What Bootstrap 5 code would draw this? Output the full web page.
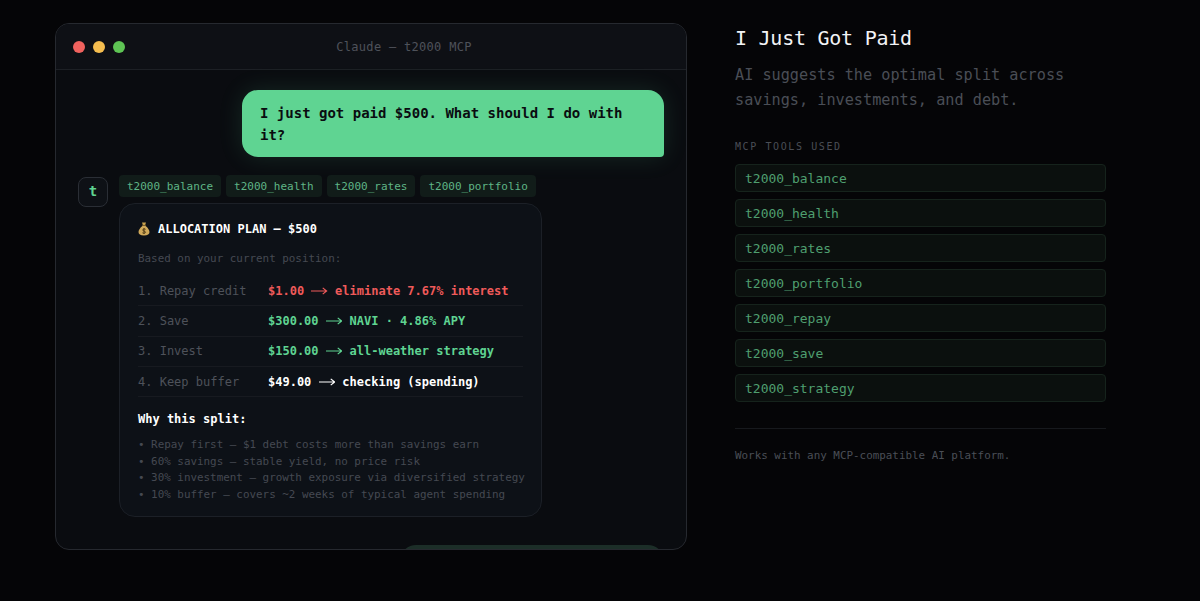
<!DOCTYPE html>
<html lang="en">
<head>
    <meta charset="UTF-8">
    <meta name="viewport" content="width=device-width, initial-scale=1.0">
    <title>I Just Got Paid</title>
    <link href="https://cdn.jsdelivr.net/npm/bootstrap@5.3.0/dist/css/bootstrap.min.css" rel="stylesheet">
    <style>
        body {
            background-color: #050507;
            color: #fff;
            font-family: "DejaVu Sans Mono", "Liberation Mono", monospace;
            height: 601px;
            overflow: hidden;
        }
        .page-wrap {
            padding: 23px 0 0 55px;
            gap: 48px;
        }
        .term-window {
            width: 632px;
            height: 527px;
            background-color: #0a0c10;
            border: 1px solid #26292f;
            border-radius: 14px;
            overflow: hidden;
            box-shadow: 0 0 40px rgba(255, 255, 255, .015);
        }
        .term-bar {
            height: 46px;
            background-color: #0e1015;
            border-bottom: 1px solid #1d2025;
            padding: 0 17px;
        }
        .term-dot { width: 12px; height: 12px; border-radius: 50%; }
        .dot-red { background-color: #f0625e; }
        .dot-yellow { background-color: #f5bd4f; }
        .dot-green { background-color: #5ec454; }
        .term-title {
            padding-left: 6px;
            text-align: center;
            font-size: 12px;
            letter-spacing: .3px;
            color: #4e525a;
        }
        .chat-body { padding: 20px 22px 0; }
        .user-bubble {
            width: 422px;
            background-color: #5fd492;
            color: #0a0c10;
            font-size: 14px;
            font-weight: 700;
            line-height: 22.4px;
            padding: 12px 18px 10px;
            border-radius: 16px 16px 4px 16px;
            box-shadow: 0 0 24px rgba(95, 212, 146, .14);
        }
        .next-bubble {
            width: 264px;
            height: 40px;
            margin-top: 28px;
            background-color: #1c2e28;
            border-radius: 16px 16px 4px 16px;
        }
        .agent-row { margin-top: 18px; gap: 11px; }
        .agent-avatar {
            width: 30px;
            height: 30px;
            margin-top: 2px;
            border: 1px solid #2a2e35;
            border-radius: 8px;
            background-color: #0e1116;
            color: #5fd492;
            font-size: 14px;
            font-weight: 700;
        }
        .tool-chips { gap: 5px; margin-bottom: 6px; }
        .tool-chip {
            height: 22px;
            line-height: 23px;
            padding: 0 8px;
            font-size: 11px;
            color: #5fb586;
            background-color: #111c19;
            border-radius: 4px;
        }
        .plan-card {
            width: 423px;
            background-color: #0d1117;
            border: 1px solid #1c2027;
            border-radius: 16px;
            padding: 16px 18px 13px;
        }
        .plan-title {
            font-size: 12px;
            font-weight: 700;
            line-height: 19px;
            color: #fff;
            margin-bottom: 11px;
        }
        .plan-note { font-size: 10.9px; line-height: 17px; color: #454952; margin-bottom: 9px; }
        .plan-row {
            height: 30.4px;
            font-size: 12px;
            border-bottom: 1px solid #171a20;
        }
        .plan-label { width: 130px; color: #4e525a; }
        .plan-value { font-weight: 700; }
        .val-red { color: #ef5a5a; }
        .val-green { color: #5fd492; }
        .val-white { color: #fff; }
        .flow-arrow { width: 16.6px; height: 8px; margin: 0 7.2px; vertical-align: 0; }
        .why-title { font-size: 12px; font-weight: 700; line-height: 19px; margin: 13px 0 8px; }
        .why-list { font-size: 10.9px; line-height: 16.4px; color: #454952; white-space: nowrap; }
        .side-panel { width: 371px; }
        .side-title { font-size: 20px; font-weight: 400; letter-spacing: -.25px; line-height: 30px; margin: 0 0 10px; color: #f2f3f5; }
        .side-sub { font-size: 15.2px; line-height: 25px; color: #4a4e56; margin-bottom: 26px; }
        .side-label { font-size: 10px; letter-spacing: 1.6px; line-height: 15px; color: #4a4e56; margin-bottom: 10px; }
        .tool-list { gap: 7px; }
        .tool-item {
            height: 28px;
            line-height: 27px;
            padding: 0 9px;
            font-size: 13px;
            color: #4f9f70;
            background-color: #0b100e;
            border: 1px solid #16231c;
            border-radius: 4px;
        }
        .side-rule { height: 1px; background-color: #17191d; margin: 26px 0 18px; }
        .side-foot { font-size: 10.9px; line-height: 17px; color: #4a4e56; }
    </style>
</head>
<body>
    <div class="page-wrap d-flex align-items-start">
        <!-- chat window -->
        <div class="term-window">
            <div class="term-bar d-flex align-items-center gap-2">
                <span class="term-dot dot-red"></span>
                <span class="term-dot dot-yellow"></span>
                <span class="term-dot dot-green"></span>
                <span class="term-title flex-grow-1">Claude — t2000 MCP</span>
            </div>
            <div class="chat-body">
                <div class="user-bubble ms-auto">I just got paid $500. What should I do with it?</div>

                <div class="agent-row d-flex align-items-start">
                    <div class="agent-avatar d-flex align-items-center justify-content-center flex-shrink-0">t</div>
                    <div>
                        <div class="tool-chips d-flex">
                            <span class="tool-chip">t2000_balance</span>
                            <span class="tool-chip">t2000_health</span>
                            <span class="tool-chip">t2000_rates</span>
                            <span class="tool-chip">t2000_portfolio</span>
                        </div>
                        <div class="plan-card">
                            <div class="plan-title d-flex align-items-center">
                                <svg class="me-2" width="12" height="14" viewBox="0 0 12 14">
                                    <path d="M4 .6h4L7.200 3h-2.400z" fill="#c9a24e"/>
                                    <rect x="4.200" y="2.900" width="3.600" height="1" fill="#8a6a2c"/>
                                    <path d="M4.400 3.900h3.200c2.200 1.600 3.900 4 3.900 6.200 0 2.400-1.800 3.400-5.500 3.400S.5 12.500.5 10.100c0-2.200 1.700-4.600 3.900-6.200z" fill="#d0a95a"/>
                                    <path d="M7.600 7.300C7 6.800 4.700 6.700 4.700 8c0 1.400 2.800.8 2.800 2.200 0 1.300-2.400 1.200-3.100.6M6 6v6" fill="none" stroke="#4a3512" stroke-width=".9"/>
                                </svg>
                                <span>ALLOCATION PLAN — $500</span>
                            </div>
                            <div class="plan-note">Based on your current position:</div>

                            <div class="plan-row d-flex align-items-center">
                                <span class="plan-label">1. Repay credit</span>
                                <span class="plan-value val-red">$1.00<svg class="flow-arrow" viewBox="0 0 17 8"><path d="M0 4h16M12 .8 16 4l-4 3.200" fill="none" stroke="currentColor" stroke-width="1.200"/></svg>eliminate 7.67% interest</span>
                            </div>
                            <div class="plan-row d-flex align-items-center">
                                <span class="plan-label">2. Save</span>
                                <span class="plan-value val-green">$300.00<svg class="flow-arrow" viewBox="0 0 17 8"><path d="M0 4h16M12 .8 16 4l-4 3.200" fill="none" stroke="currentColor" stroke-width="1.200"/></svg>NAVI · 4.86% APY</span>
                            </div>
                            <div class="plan-row d-flex align-items-center">
                                <span class="plan-label">3. Invest</span>
                                <span class="plan-value val-green">$150.00<svg class="flow-arrow" viewBox="0 0 17 8"><path d="M0 4h16M12 .8 16 4l-4 3.200" fill="none" stroke="currentColor" stroke-width="1.200"/></svg>all-weather strategy</span>
                            </div>
                            <div class="plan-row d-flex align-items-center">
                                <span class="plan-label">4. Keep buffer</span>
                                <span class="plan-value val-white">$49.00<svg class="flow-arrow" viewBox="0 0 17 8"><path d="M0 4h16M12 .8 16 4l-4 3.200" fill="none" stroke="currentColor" stroke-width="1.200"/></svg>checking (spending)</span>
                            </div>

                            <div class="why-title">Why this split:</div>
                            <div class="why-list">
                                <div>• Repay first — $1 debt costs more than savings earn</div>
                                <div>• 60% savings — stable yield, no price risk</div>
                                <div>• 30% investment — growth exposure via diversified strategy</div>
                                <div>• 10% buffer — covers ~2 weeks of typical agent spending</div>
                            </div>
                        </div>
                    </div>
                </div>

                <div class="next-bubble ms-auto"></div>
            </div>
        </div>

        <!-- right column -->
        <div class="side-panel">
            <h1 class="side-title">I Just Got Paid</h1>
            <p class="side-sub">AI suggests the optimal split across savings, investments, and debt.</p>
            <div class="side-label">MCP TOOLS USED</div>
            <div class="tool-list d-flex flex-column">
                <div class="tool-item">t2000_balance</div>
                <div class="tool-item">t2000_health</div>
                <div class="tool-item">t2000_rates</div>
                <div class="tool-item">t2000_portfolio</div>
                <div class="tool-item">t2000_repay</div>
                <div class="tool-item">t2000_save</div>
                <div class="tool-item">t2000_strategy</div>
            </div>
            <div class="side-rule"></div>
            <div class="side-foot">Works with any MCP-compatible AI platform.</div>
        </div>
    </div>

    <script src="https://cdn.jsdelivr.net/npm/bootstrap@5.3.0/dist/js/bootstrap.bundle.min.js"></script>
</body>
</html>
